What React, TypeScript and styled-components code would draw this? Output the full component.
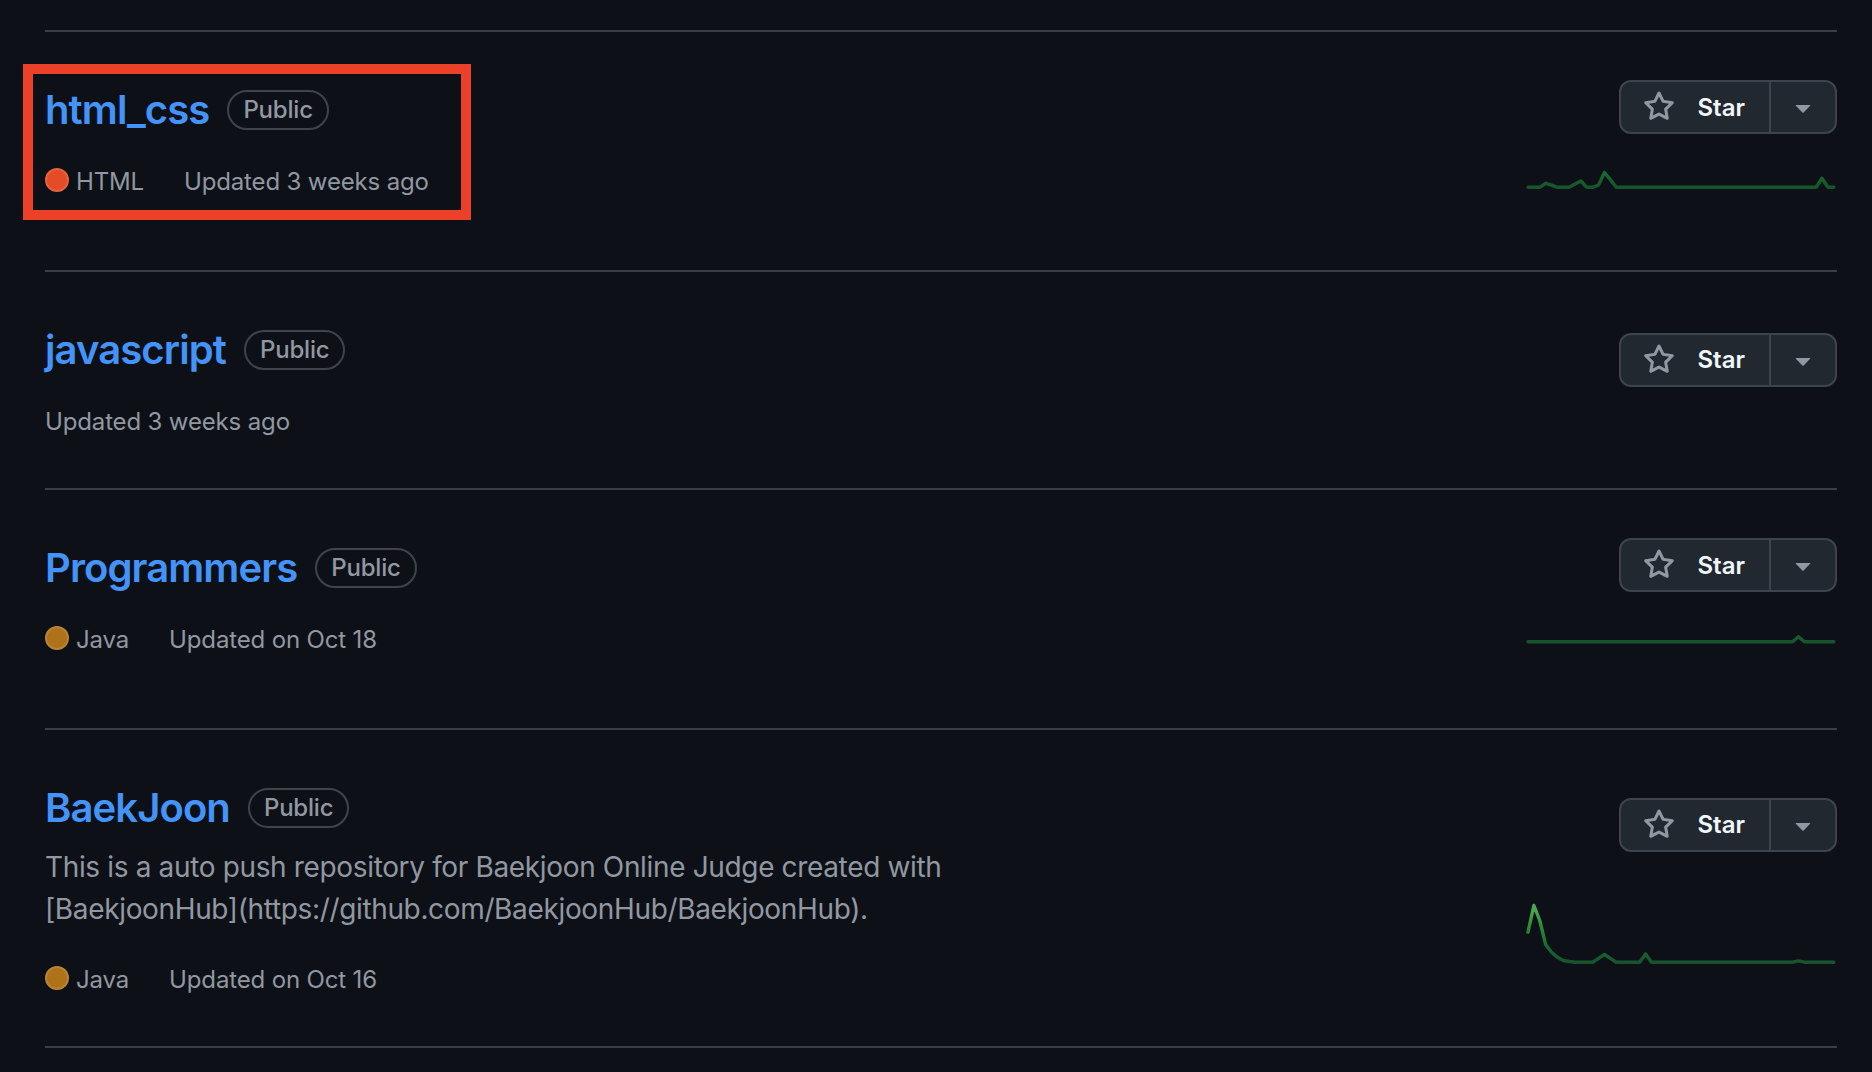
import React from "react";
import styled, { createGlobalStyle } from "styled-components";

const GlobalStyle = createGlobalStyle`
  html, body { margin: 0; padding: 0; background: #0d1117; }
  body {
    font-family: Inter, "Noto Sans", "Liberation Sans", sans-serif;
    -webkit-font-smoothing: antialiased;
  }
  * { box-sizing: border-box; }
`;

const Page = styled.main`
  min-height: 1072px;
  padding: 30px 35px 0 45px;
  background: #0d1117;
`;

const List = styled.ul`
  list-style: none;
  margin: 0;
  padding: 0;
  border-top: 2px solid #3a3e45;
`;

const Row = styled.li`
  position: relative;
  display: flex;
  justify-content: space-between;
  padding: 48px 0;
  border-bottom: 2px solid #3a3e45;
`;

const Highlight = styled.div`
  position: absolute;
  top: 32px;
  left: -22px;
  width: 448px;
  height: 156px;
  border: 10px solid #ea4128;
  pointer-events: none;
`;

const Info = styled.div`
  display: flex;
  flex-direction: column;
  min-width: 0;
`;

const TitleLine = styled.div`
  display: flex;
  align-items: center;
  gap: 18px;
  height: 60px;
  margin-bottom: 8px;
`;

const RepoName = styled.a`
  font-size: 40px;
  font-weight: 600;
  line-height: 60px;
  letter-spacing: -0.9px;
  color: #4493f8;
  text-decoration: none;
`;

const Badge = styled.span`
  display: inline-flex;
  align-items: center;
  height: 40px;
  padding: 0 14px;
  border: 2px solid #3d444d;
  border-radius: 999px;
  font-size: 24px;
  font-weight: 500;
  line-height: 36px;
  letter-spacing: -0.2px;
  color: #9198a1;
`;

const Description = styled.p`
  margin: 0 0 16px;
  width: 1008px;
  padding-right: 48px;
  font-size: 28px;
  line-height: 42px;
  letter-spacing: -0.35px;
  color: #9198a1;
`;

const Meta = styled.div`
  display: flex;
  align-items: center;
  height: 36px;
  margin-top: 16px;
  font-size: 24px;
  line-height: 36px;
  letter-spacing: -0.15px;
  color: #9198a1;
`;

const Lang = styled.span`
  display: inline-flex;
  align-items: center;
  margin-right: 40px;
`;

const LangDot = styled.span<{ $color: string }>`
  width: 24px;
  height: 24px;
  margin-right: 7px;
  margin-bottom: 4px;
  border-radius: 50%;
  background: ${(p) => p.$color};
  border: 2px solid rgba(255, 255, 255, 0.12);
`;

const Side = styled.div`
  flex: none;
  width: 310px;
  display: flex;
  flex-direction: column;
  align-items: flex-end;
  justify-content: space-around;
`;

const StarGroup = styled.div`
  display: flex;
  height: 54px;
  border: 2px solid #3d444d;
  border-radius: 12px;
  background: #212830;
  overflow: hidden;
`;

const StarButton = styled.button`
  display: flex;
  align-items: center;
  gap: 22px;
  padding: 0 24px 0 22px;
  border: 0;
  border-right: 2px solid #3d444d;
  background: transparent;
  color: #f0f6fc;
  font-family: Inter, "Noto Sans", "Liberation Sans", sans-serif;
  font-size: 24px;
  font-weight: 600;
  cursor: pointer;
`;

const CaretButton = styled.button`
  display: flex;
  align-items: center;
  justify-content: center;
  width: 64px;
  padding: 0;
  border: 0;
  background: transparent;
  cursor: pointer;
`;

const SparkSlot = styled.div`
  margin-top: 16px;
  width: 310px;
`;

const SparkSvg = styled.svg`
  display: block;
  overflow: visible;
`;

const StarIcon = () => (
  <svg width="32" height="32" viewBox="0 0 16 16" fill="#9198a1" aria-hidden="true">
    <path d="M8 .25a.75.75 0 0 1 .673.418l1.882 3.815 4.21.612a.75.75 0 0 1 .416 1.279l-3.046 2.97.719 4.192a.751.751 0 0 1-1.088.791L8 12.347l-3.766 1.98a.75.75 0 0 1-1.088-.79l.72-4.194L.818 6.374a.75.75 0 0 1 .416-1.28l4.21-.611L7.327.668A.75.75 0 0 1 8 .25Zm0 2.445L6.615 5.5a.75.75 0 0 1-.564.41l-3.097.45 2.24 2.184a.75.75 0 0 1 .216.664l-.528 3.084 2.769-1.456a.75.75 0 0 1 .698 0l2.77 1.456-.53-3.084a.75.75 0 0 1 .216-.664l2.24-2.183-3.096-.45a.75.75 0 0 1-.564-.41L8 2.694Z" />
  </svg>
);

const CaretIcon = () => (
  <svg width="32" height="32" viewBox="0 0 16 16" fill="#9198a1" aria-hidden="true">
    <path d="m4.427 7.427 3.396 3.396a.25.25 0 0 0 .354 0l3.396-3.396A.25.25 0 0 0 11.396 7H4.604a.25.25 0 0 0-.177.427Z" />
  </svg>
);

type Spark = { base: number; peaks: Record<number, number> };

const Sparkline = ({ id, spark }: { id: string; spark: Spark }) => {
  const pts: string[] = [];
  for (let i = 0; i < 53; i++) {
    const x = 1 + i * 5.88;
    const y = spark.base - (spark.peaks[i] || 0);
    pts.push(`${x.toFixed(2)},${y.toFixed(2)}`);
  }
  const bottom = spark.base + 3;
  return (
    <SparkSvg width="310" height="72" viewBox="0 0 310 72">
      <defs>
        <linearGradient id={id} gradientUnits="userSpaceOnUse" x1="0" x2="0" y1={bottom} y2={bottom - 60}>
          <stop offset="0%" stopColor="#17502b" />
          <stop offset="33%" stopColor="#176b31" />
          <stop offset="66%" stopColor="#2d8c3b" />
          <stop offset="90%" stopColor="#4aa44e" />
        </linearGradient>
      </defs>
      <polyline
        points={pts.join(" ")}
        fill="none"
        stroke={`url(#${id})`}
        strokeWidth="3.4"
        strokeLinejoin="round"
        strokeLinecap="round"
      />
    </SparkSvg>
  );
};

type Repo = {
  name: string;
  desc?: string;
  lang?: { name: string; color: string };
  updated: string;
  spark?: Spark;
  highlighted?: boolean;
};

const repos: Repo[] = [
  {
    name: "html_css",
    lang: { name: "HTML", color: "#e34c26" },
    updated: "Updated 3 weeks ago",
    spark: { base: 37.3, peaks: { 3: 4, 4: 2.2, 8: 3.3, 9: 6.3, 12: 2.3, 13: 14.7, 14: 7.7, 50: 9 } },
    highlighted: true,
  },
  {
    name: "javascript",
    updated: "Updated 3 weeks ago",
  },
  {
    name: "Programmers",
    lang: { name: "Java", color: "#b07219" },
    updated: "Updated on Oct 18",
    spark: { base: 33.7, peaks: { 46: 5 } },
  },
  {
    name: "BaekJoon",
    desc: "This is a auto push repository for Baekjoon Online Judge created with [BaekjoonHub](https://github.com/BaekjoonHub/BaekjoonHub).",
    lang: { name: "Java", color: "#b07219" },
    updated: "Updated on Oct 16",
    spark: {
      base: 55.2,
      peaks: { 0: 30, 1: 56.7, 2: 41.7, 3: 17.7, 4: 10, 5: 5, 6: 1.7, 7: 0.7, 12: 3.8, 13: 7.7, 14: 3.8, 20: 8.3, 46: 1.3 },
    },
  },
];

export default function App() {
  return (
    <>
      <GlobalStyle />
      <Page>
        <List>
          {repos.map((r, idx) => (
            <Row key={r.name}>
              <Info>
                <TitleLine>
                  <RepoName href="#">{r.name}</RepoName>
                  <Badge>Public</Badge>
                </TitleLine>
                {r.desc && <Description>{r.desc}</Description>}
                <Meta>
                  {r.lang && (
                    <Lang>
                      <LangDot $color={r.lang.color} />
                      {r.lang.name}
                    </Lang>
                  )}
                  <span>{r.updated}</span>
                </Meta>
              </Info>
              <Side>
                <StarGroup>
                  <StarButton type="button">
                    <StarIcon />
                    Star
                  </StarButton>
                  <CaretButton type="button" aria-label="Lists">
                    <CaretIcon />
                  </CaretButton>
                </StarGroup>
                <SparkSlot>{r.spark && <Sparkline id={`spark-${idx}`} spark={r.spark} />}</SparkSlot>
              </Side>
              {r.highlighted && <Highlight />}
            </Row>
          ))}
        </List>
      </Page>
    </>
  );
}
